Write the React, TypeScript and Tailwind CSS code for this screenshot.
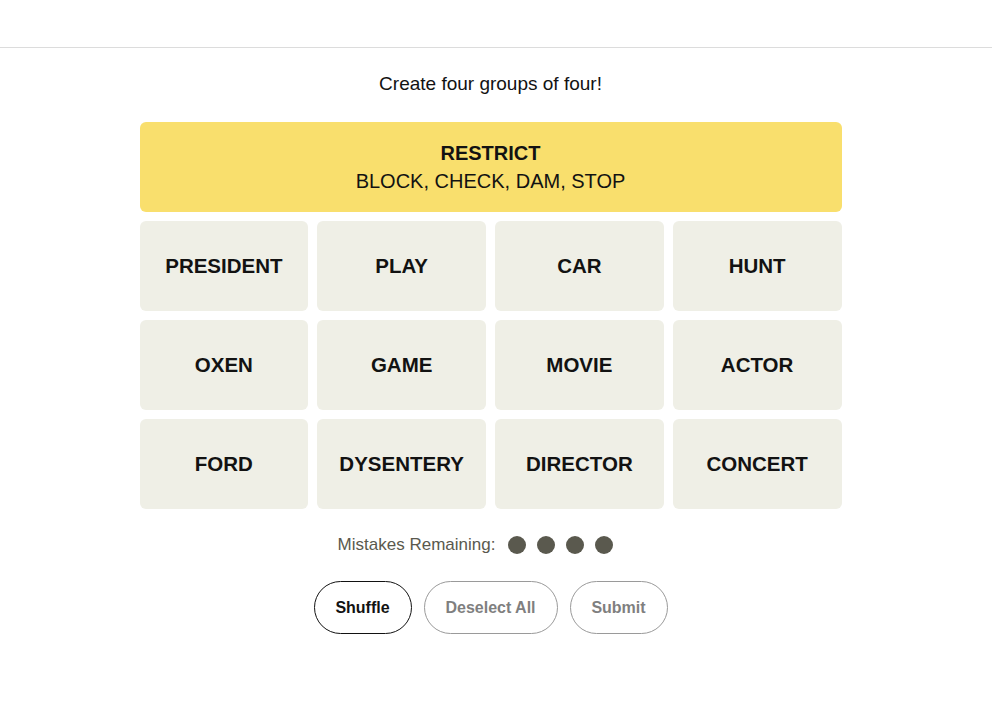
import React from "react";

const rows = [
  ["PRESIDENT", "PLAY", "CAR", "HUNT"],
  ["OXEN", "GAME", "MOVIE", "ACTOR"],
  ["FORD", "DYSENTERY", "DIRECTOR", "CONCERT"],
];

export default function App() {
  return (
    <div className="min-h-[722px] bg-white text-[#121212]" style={{ fontFamily: '"Liberation Sans", Arial, sans-serif' }}>
      <div className="h-[48px] border-b border-[#dcdcdc]" />
      <div className="pr-[11px] flex flex-col items-center">
        <p className="mt-[24px] text-[19px] leading-[24px]">Create four groups of four!</p>
        <div className="mt-[26px] w-[702px] flex flex-col gap-[9px]">
          <div className="h-[90px] rounded-[6px] bg-[#f9df6d] flex flex-col items-center justify-center">
            <div className="text-[20px] leading-[28px] font-bold">RESTRICT</div>
            <div className="text-[20px] leading-[28px]">BLOCK, CHECK, DAM, STOP</div>
          </div>
          {rows.map((r, i) => (
            <div key={i} className="grid grid-cols-4 gap-[9px]">
              {r.map((w) => (
                <div key={w} className="h-[90px] rounded-[6px] bg-[#efefe6] flex items-center justify-center text-[20.5px] font-bold">
                  {w}
                </div>
              ))}
            </div>
          ))}
        </div>
        <div className="mt-[24px] h-[24px] flex items-center pr-[30px]">
          <span className="text-[17px] text-[#5a594e]">Mistakes Remaining:</span>
          <div className="ml-[13px] flex gap-[11px]">
            {[0, 1, 2, 3].map((k) => (
              <span key={k} className="block w-[18px] h-[18px] rounded-full bg-[#5a594e]" />
            ))}
          </div>
        </div>
        <div className="mt-[24px] flex gap-[12px]">
          <button className="w-[98px] h-[53px] rounded-full border border-[#121212] text-[16px] font-bold text-[#121212]">Shuffle</button>
          <button className="w-[134px] h-[53px] rounded-full border border-[#9a9a9a] text-[16px] font-bold text-[#7f7f7f]">Deselect All</button>
          <button className="w-[98px] h-[53px] rounded-full border border-[#9a9a9a] text-[16px] font-bold text-[#7f7f7f]">Submit</button>
        </div>
      </div>
    </div>
  );
}
